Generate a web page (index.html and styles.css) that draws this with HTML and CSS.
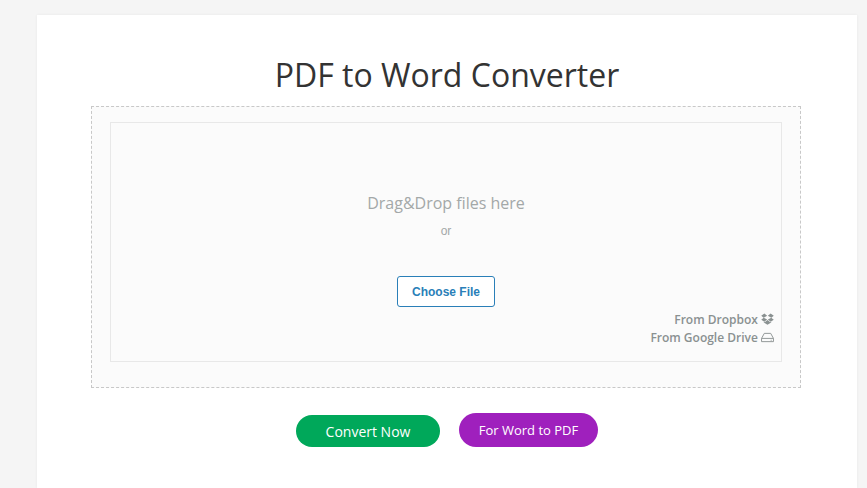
FILE: index.html
```html
<!DOCTYPE html>
<html lang="en">

<head>
    <meta charset="UTF-8" />
    <title>PDF to Word Converter</title>
    <link rel="stylesheet" href="styles.css">
</head>

<body>
    <main class="card">
        <h1>PDF to Word Converter</h1>

        <!-- upload area -->
        <div class="drop-outer">
            <div class="drop-inner">
                <p class="drop-title">Drag&amp;Drop files here</p>
                <p class="drop-or">or</p>
                <button class="choose-btn">Choose File</button>
                <div class="cloud-links">
                    <a class="cloud-link">From Dropbox
                        <svg class="cloud-icon" viewBox="0 0 14 13" width="13" height="12">
                            <path fill="#8a9191" d="M3.6 0.6 0.2 2.9l2.7 2.2L6.6 3 3.6 .6zM10.4 .6 7.4 3l3.7 2.1 2.7-2.2L10.4 .6zM2.9 5.1 .2 7.3l3.4 2.3 3-2.5-3.7-2zM11.1 5.1 7.4 7.1l3 2.5 3.4-2.3-2.7-2.2zM7 7.6 4 10.1l-1-.7v1l4 2.4 4-2.4v-1l-1 .7-3-2.5z"/>
                        </svg>
                    </a>
                    <a class="cloud-link">From Google Drive
                        <svg class="cloud-icon" viewBox="0 0 14 12" width="13" height="11">
                            <path fill="none" stroke="#8a9191" stroke-width="1" d="M3.5 1.5h7l3 5.5v3.5h-13V7zM.5 7h13M10.5 9h1"/>
                        </svg>
                    </a>
                </div>
            </div>
        </div>

        <!-- actions -->
        <div class="actions">
            <button class="pill pill-green">Convert Now</button>
            <button class="pill pill-purple">For Word to PDF</button>
        </div>
    </main>
</body>

</html>
```

FILE: styles.css
```css
html, body {
    height: 100%;
}

body {
    margin: 0;
    height: 488px;
    overflow: hidden;
    background: #f5f5f5;
    font-family: "Open Sans", "Noto Sans", sans-serif;
}

.card {
    width: 820px;
    height: 473px;
    margin: 15px 0 0 37px;
    padding: 36px 54px 0;
    box-sizing: border-box;
    background: #fff;
    box-shadow: 0 0 3px rgba(0, 0, 0, 0.06);
}

h1 {
    margin: 0 0 7px;
    font-size: 32px;
    line-height: 48px;
    font-weight: 400;
    text-align: center;
    color: #333;
}

/* upload area */
.drop-outer {
    width: 710px;
    height: 282px;
    padding: 15px 18px 25px;
    box-sizing: border-box;
    background: #fbfbfb;
    border: 1px dashed #c8c8c8;
}

.drop-inner {
    position: relative;
    height: 240px;
    box-sizing: border-box;
    padding-top: 68px;
    text-align: center;
    border: 1px solid #e8e8e8;
}

.drop-title {
    margin: 0;
    font-size: 16px;
    line-height: 24px;
    color: #a3a8a8;
}

.drop-or {
    margin: 8px 0 0;
    font-family: "Liberation Sans", Arial, sans-serif;
    font-size: 12px;
    line-height: 16px;
    color: #a3a8a8;
}

.choose-btn {
    display: block;
    width: 98px;
    height: 31px;
    margin: 37px auto 0;
    padding: 0;
    font-family: "Liberation Sans", Arial, sans-serif;
    font-size: 12px;
    font-weight: 700;
    color: #2a7fb8;
    background: #fff;
    border: 1px solid #2a7fb8;
    border-radius: 3px;
}

.cloud-links {
    position: absolute;
    right: 7px;
    bottom: 14px;
    text-align: right;
}

.cloud-link {
    display: block;
    font-size: 12px;
    line-height: 18px;
    font-weight: 600;
    color: #8a9191;
}

.cloud-icon {
    vertical-align: -1px;
}

/* actions */
.actions {
    display: flex;
    justify-content: center;
    align-items: flex-end;
    gap: 19px;
    margin-top: 25px;
}

.pill {
    padding: 0;
    font-family: "Open Sans", "Noto Sans", sans-serif;
    color: #fff;
    border: 0;
}

.pill-green {
    width: 144px;
    height: 32px;
    font-size: 14px;
    background: #00a85a;
    border-radius: 16px;
}

.pill-purple {
    width: 139px;
    height: 34px;
    font-size: 13px;
    background: #9f20bd;
    border-radius: 17px;
}
```
